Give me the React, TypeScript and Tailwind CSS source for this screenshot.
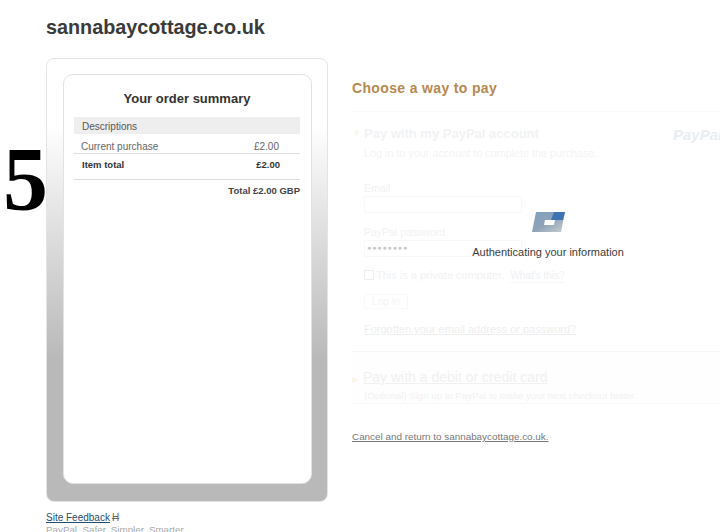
export default function App() {
  return (
    <div className="relative h-[532px] w-[720px] overflow-hidden bg-white font-['Liberation_Sans',Arial,sans-serif]">
      <div className="pl-[46px] pt-[14px]">
        <h1 className="h-[26px] text-[19.8px] font-bold leading-[26px] text-[#3a3a3a]">sannabaycottage.co.uk</h1>

        <div className="mt-[18px] flex items-start">
          {/* Order summary */}
          <div className="w-[282px] shrink-0">
            <div className="h-[444px] rounded-[8px] border border-[#e4e4e4] bg-gradient-to-b from-white from-[15%] to-[#b9b9b9] to-[68%] pl-[16px] pr-[15px] pt-[15px]">
              <div className="h-[410px] rounded-[10px] border border-[#e2e2e2] bg-white pl-[10px] pr-[11px]">
                <h2 className="mt-[15px] text-center text-[13px] font-bold leading-[18px] text-[#333]">Your order summary</h2>
                <div className="mt-[9px] h-[17px] bg-[#eeeeee] pl-[8px] pt-[1px] text-[10px] leading-[17px] text-[#555]">Descriptions</div>
                <div className="flex h-[20px] items-center justify-between border-b border-[#ddd] pl-[7px] pr-[21px] pt-[5px] text-[10px] text-[#666]">
                  <span>Current purchase</span>
                  <span>£2.00</span>
                </div>
                <div className="flex h-[26px] items-center justify-between border-b border-[#ddd] pl-[8px] pr-[20px] pb-[3px] text-[9.5px] font-bold text-[#333]">
                  <span>Item total</span>
                  <span>£2.00</span>
                </div>
                <div className="mt-[5px] text-right text-[9.5px] font-bold leading-[12px] text-[#444]">Total £2.00 GBP</div>
              </div>
            </div>
            <div className="mt-[10px] text-[10px] leading-[12px]">
              <a className="text-[#1f4e6e] underline">Site Feedback</a>
              <span className="ml-[2px] text-[#666] line-through">H</span>
            </div>
            <div className="text-[9.8px] leading-[12px] text-[#aaa]">PayPal. Safer. Simpler. Smarter.</div>
          </div>

          {/* Payment column, faded behind the overlay */}
          <div className="ml-[24px] w-[368px] shrink-0">
            <h2 className="mt-[21px] text-[14px] font-bold leading-[18px] tracking-[0.35px] text-[#b5894f]">Choose a way to pay</h2>
            <div className="mt-[14px] border-t border-[#fafafa] pl-[12px] pt-[13px]">
              <div className="relative">
                <span className="absolute -left-[12px] top-[2px] text-[9px] text-[#f9f5ea]">▼</span>
                <div className="text-[13px] font-bold leading-[18px] text-[#f0f2f4]">Pay with my PayPal account</div>
                <span className="absolute left-[309px] -top-[1px] text-[15px] font-bold italic text-[#e8edf3]">PayPal</span>
              </div>
              <div className="mt-[3px] text-[10.8px] leading-[14px] text-[#f3f3f3]">Log in to your account to complete the purchase.</div>
              <div className="mt-[21px] text-[10.5px] leading-[14px] text-[#f1f1f1]">Email</div>
              <div className="mt-[1px] h-[17px] w-[158px] border border-[#f8f8f8]"></div>
              <div className="mt-[12px] text-[10.5px] leading-[14px] text-[#f1f1f1]">PayPal password</div>
              <div className="mt-[1px] flex h-[17px] w-[158px] items-center border border-[#f8f8f8] pl-[2px] text-[7px] tracking-[0.9px] text-[#c8c8c8]">●●●●●●●●</div>
              <div className="mt-[11px] flex h-[14px] items-center text-[11px] text-[#f1f1f1]">
                <span className="mr-[2px] size-[10px] border border-[#eeeeee]"></span>
                <span>This is a private computer.</span>
                <span className="ml-[6px] mt-[2px] border-b border-dotted border-[#eceef2] text-[10px] leading-[12px] text-[#eef0f3]">What's this?</span>
              </div>
              <div className="mt-[12px] flex h-[15px] w-[44px] items-center justify-center border border-[#f9f9f9] text-[10px] text-[#f3f3f3]">Log In</div>
              <div className="mt-[13px] text-[11px] leading-[14px] text-[#eeeeee] underline">Forgotten your email address or password?</div>
            </div>
            <div className="mt-[15px] border-t border-[#f6f6f6] bg-[#fefefe] pl-[11px] pt-[17px]">
              <div className="relative text-[14px] leading-[16px] text-[#f0f0f0] underline">
                <span className="absolute -left-[11px] top-[3px] text-[8px] text-[#f9f5ea] no-underline">▶</span>
                Pay with a debit or credit card
              </div>
              <div className="mt-[4px] h-[14px] pl-[1px] text-[9.7px] leading-[14px] text-[#f1f1f1]">(Optional) Sign up to PayPal to make your next checkout faster.</div>
            </div>
            <div className="border-t border-[#f8f8f8] pt-[27px] text-[9.9px] leading-[12px] text-[#777] underline">Cancel and return to sannabaycottage.co.uk.</div>
          </div>
        </div>
      </div>

      {/* Handwritten step number over the page */}
      <div className="absolute left-[3px] top-[132px] font-['Liberation_Serif',serif] text-[90px] font-bold leading-[96px] text-black">5</div>

      {/* Authenticating overlay */}
      <div className="absolute left-[472px] top-[212px] w-[152px] text-center">
        <svg className="ml-[60px] block" width="34" height="20" viewBox="0 0 34 20">
          <defs>
            <linearGradient id="card" x1="0" y1="0" x2="1" y2="1">
              <stop offset="0" stopColor="#7f9fc0" />
              <stop offset="0.5" stopColor="#8ea3b8" />
              <stop offset="1" stopColor="#c8ced0" />
            </linearGradient>
          </defs>
          <path d="M4 0H33L29 20H0Z" fill="url(#card)" />
          <path d="M22 0H33L31 8H19Z" fill="#3f74b4" />
          <path d="M13 8H23L22 13H12Z" fill="#fff" />
        </svg>
        <div className="mt-[13px] whitespace-nowrap text-[11px] leading-[14px] text-[#3c3c3c]">Authenticating your information</div>
      </div>
    </div>
  );
}
